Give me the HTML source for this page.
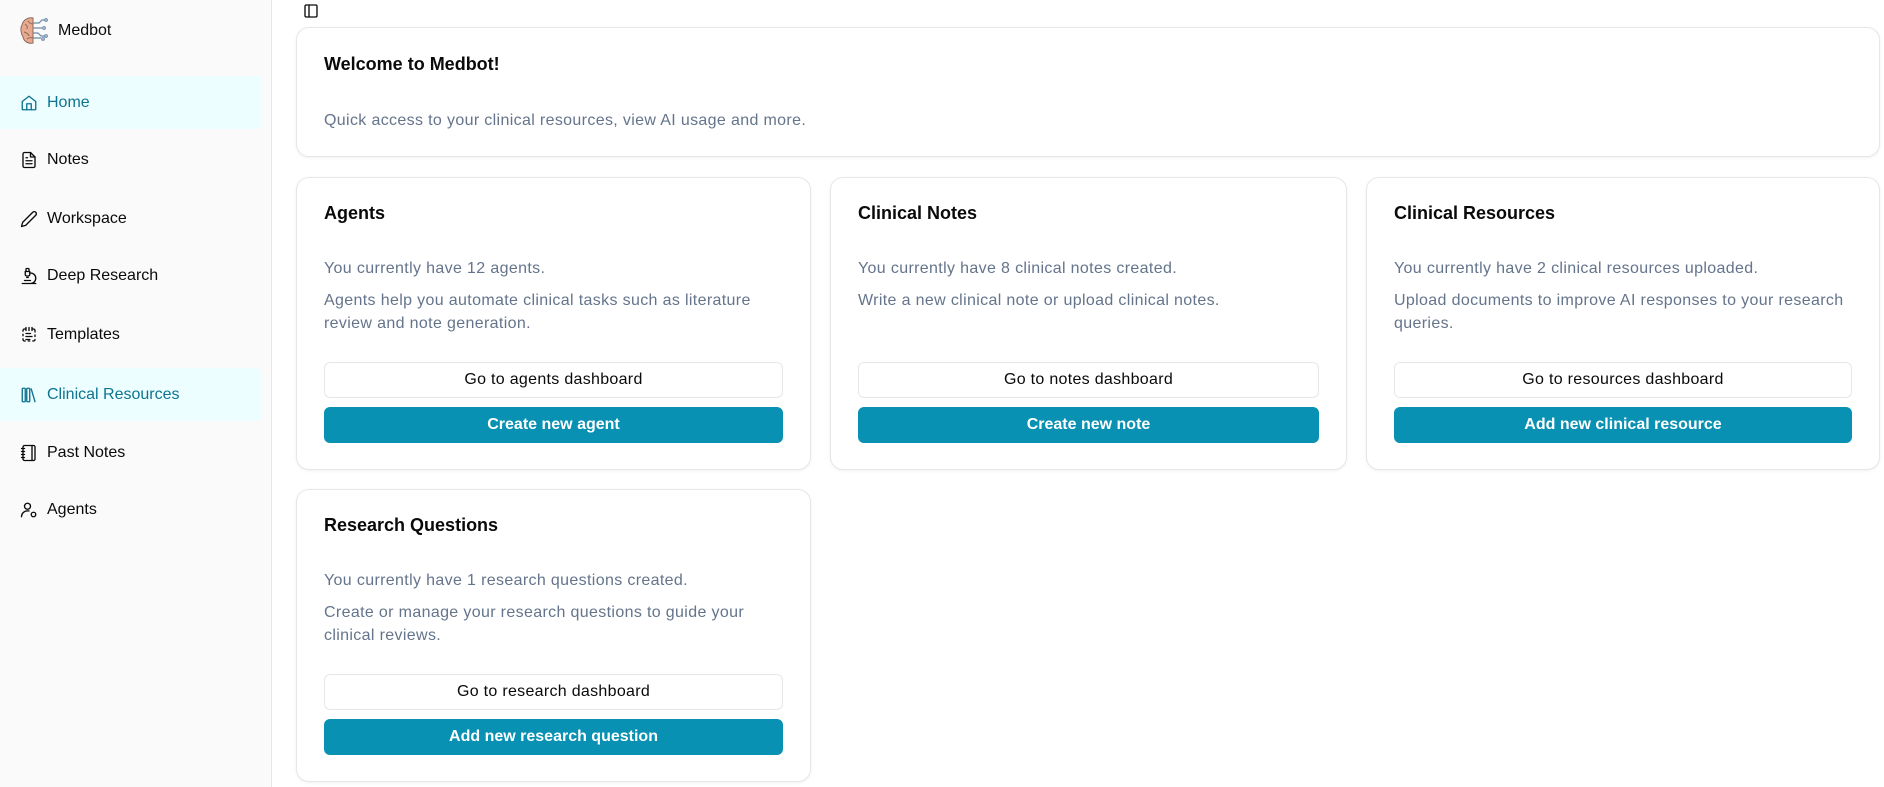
<!DOCTYPE html>
<html><head><meta charset="utf-8"><style>
*{box-sizing:border-box;margin:0;padding:0}
body{width:1884px;height:787px;background:#fff;font-family:"Liberation Sans",sans-serif;position:relative;overflow:hidden;color:#0a0a0a}
.side{position:absolute;left:0;top:0;width:272px;height:787px;background:#fafafa;border-right:1px solid #e5e7eb}
.logo{position:absolute;left:19px;top:15px;width:30px;height:31px}
.brand{position:absolute;left:58px;top:22px;font-size:16px}
.nav{position:absolute;left:0;width:262px;height:53px;border-radius:0 6px 6px 0;display:flex;align-items:center;font-size:16px;color:#0a0a0a}
.nav.act{background:#ecfeff;color:#0e7490}
.nav svg{position:absolute;left:20px;width:18px;height:18px;fill:none;stroke:currentColor;stroke-width:1.8;stroke-linecap:round;stroke-linejoin:round}
.nav span{position:absolute;left:47px}
.card{position:absolute;background:#fff;border:1px solid #e5e7eb;border-radius:13px;box-shadow:0 1px 3px rgba(0,0,0,.06)}
.card h2{position:absolute;left:27px;font-size:18px;font-weight:bold}
.card p{position:absolute;left:27px;right:27px;font-size:16px;letter-spacing:0.35px;color:#64748b;line-height:23px}
.b1,.b2{position:absolute;left:27px;right:27px;height:36px;border-radius:6px;display:flex;align-items:center;justify-content:center;font-size:16px}
.b1{border:1px solid #e5e7eb;background:#fff;color:#0a0a0a;letter-spacing:0.3px}
.b2{background:#0891b2;color:#fff;font-weight:bold}
</style></head><body>
<div class="side">
<svg class="logo" viewBox="0 0 30 31"><path d="M14 3C9 2 4 5 3 10 1 13 2 19 4 22 5 27 10 29 14 28Z" fill="#e8a98e" stroke="#8b6a5a" stroke-width="1"/><path d="M6 9q3 2 2 5M5 17q4 1 5 4M9 6q2 3 5 3M8 24q3-2 6-1" stroke="#8b6a5a" fill="none"/><g stroke="#6b8aa8" stroke-width="1.2" fill="none"><path d="M14 8h6l3-3h3M14 13h9M14 18h5l3 3h4M14 23h8"/><circle cx="27" cy="5" r="1.3"/><circle cx="25" cy="13" r="1.3"/><circle cx="27" cy="21" r="1.3"/><circle cx="24" cy="24" r="1.3"/></g></svg>
<div class="brand">Medbot</div>
<div class="nav act" style="top:76px"><svg viewBox="0 0 24 24"><path d="M3 10l9-7 9 7v10a1 1 0 0 1-1 1H4a1 1 0 0 1-1-1z"/><path d="M9 21v-8h6v8"/></svg><span>Home</span></div>
<div class="nav" style="top:133px"><svg viewBox="0 0 24 24"><path d="M14 2H6a2 2 0 0 0-2 2v16a2 2 0 0 0 2 2h12a2 2 0 0 0 2-2V8z"/><path d="M14 2v6h6M8 13h8M8 17h8M8 9h2"/></svg><span>Notes</span></div>
<div class="nav" style="top:192px"><svg viewBox="0 0 24 24"><path d="M17 3a2.8 2.8 0 0 1 4 4L7.5 20.5 2 22l1.5-5.5z"/></svg><span>Workspace</span></div>
<div class="nav" style="top:249px"><svg viewBox="0 0 24 24"><path d="M6 18h8M3 22h18M14 22a7 7 0 1 0 0-14h-1M9 14h2M9 12a2 2 0 0 1-2-2V6h6v4a2 2 0 0 1-2 2zM12 6V3a1 1 0 0 0-1-1H9a1 1 0 0 0-1 1v3"/></svg><span>Deep Research</span></div>
<div class="nav" style="top:308px"><svg viewBox="0 0 24 24"><path d="M8 2v4M12 2v4M16 2v4M16 4h2a2 2 0 0 1 2 2v2M20 12v2M20 18a2 2 0 0 1-2 2h-1M13 20h-2M7 20H6a2 2 0 0 1-2-2v-1M4 13v-2M4 7V6a2 2 0 0 1 2-2h2M8 10h6M8 14h8M8 18h5"/></svg><span>Templates</span></div>
<div class="nav act" style="top:368px"><svg viewBox="0 0 24 24"><rect x="3" y="3" width="4" height="18" rx="1"/><rect x="9" y="3" width="4" height="18" rx="1"/><path d="M15 4l5 17"/></svg><span>Clinical Resources</span></div>
<div class="nav" style="top:426px"><svg viewBox="0 0 24 24"><path d="M2 6h4M2 10h4M2 14h4M2 18h4"/><rect x="4" y="2" width="16" height="20" rx="2"/><path d="M16 2v20"/></svg><span>Past Notes</span></div>
<div class="nav" style="top:483px"><svg viewBox="0 0 24 24"><circle cx="10" cy="7" r="4"/><path d="M2 21a8 8 0 0 1 10-7.7"/><circle cx="18" cy="18" r="3"/></svg><span>Agents</span></div>
</div>
<svg style="position:absolute;left:303px;top:3px" width="16" height="16" viewBox="0 0 24 24" fill="none" stroke="#0a0a0a" stroke-width="2"><rect x="3" y="3" width="18" height="18" rx="2"/><path d="M9 3v18"/></svg>
<div class="card" style="left:296px;top:27px;width:1584px;height:130px"><h2 style="top:26px">Welcome to Medbot!</h2><p style="top:81px">Quick access to your clinical resources, view AI usage and more.</p></div>

<div class="card" style="left:296px;top:177px;width:515px;height:293px"><h2 style="top:25px">Agents</h2><p style="top:79px">You currently have 12 agents.</p><p style="top:111px">Agents help you automate clinical tasks such as literature review and note generation.</p><div class="b1" style="top:184px">Go to agents dashboard</div><div class="b2" style="top:229px">Create new agent</div></div>

<div class="card" style="left:830px;top:177px;width:517px;height:293px"><h2 style="top:25px">Clinical Notes</h2><p style="top:79px">You currently have 8 clinical notes created.</p><p style="top:111px">Write a new clinical note or upload clinical notes.</p><div class="b1" style="top:184px">Go to notes dashboard</div><div class="b2" style="top:229px">Create new note</div></div>

<div class="card" style="left:1366px;top:177px;width:514px;height:293px"><h2 style="top:25px">Clinical Resources</h2><p style="top:79px">You currently have 2 clinical resources uploaded.</p><p style="top:111px">Upload documents to improve AI responses to your research queries.</p><div class="b1" style="top:184px">Go to resources dashboard</div><div class="b2" style="top:229px">Add new clinical resource</div></div>

<div class="card" style="left:296px;top:489px;width:515px;height:293px"><h2 style="top:25px">Research Questions</h2><p style="top:79px">You currently have 1 research questions created.</p><p style="top:111px">Create or manage your research questions to guide your clinical reviews.</p><div class="b1" style="top:184px">Go to research dashboard</div><div class="b2" style="top:229px">Add new research question</div></div>
</body></html>
